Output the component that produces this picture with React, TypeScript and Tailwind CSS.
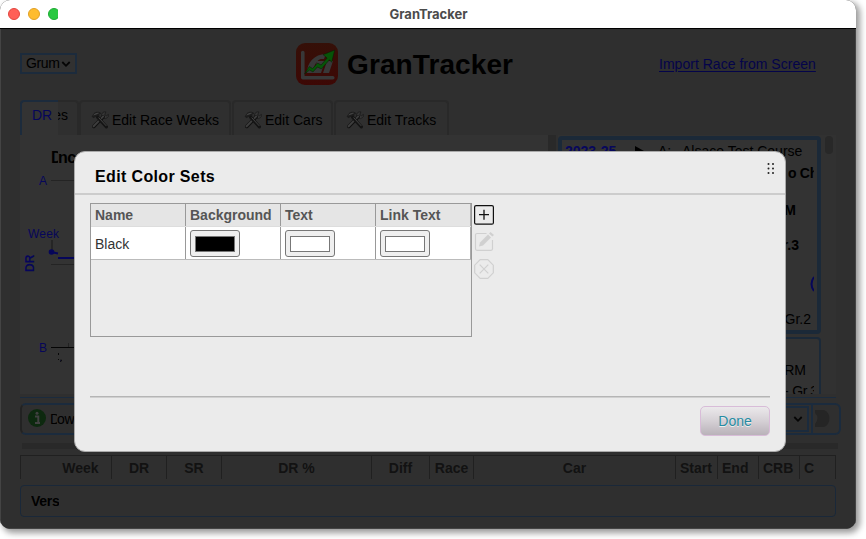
import React from "react";

function Tools() {
  return (
    <svg width="18" height="18" viewBox="0 0 18 18" fill="none" className="shrink-0">
      <path d="M12.500 7.200a3.400 3.400 0 0 0 4.900-3.700l-2.100 1.300-1.500-1L14.900.9a3.500 3.500 0 0 0-4.300 4.200z" fill="#353535" stroke="#151515" strokeWidth=".6" />
      <path d="M12.200 5.800 2.800 15.400" stroke="#111" strokeWidth="3.600" strokeLinecap="round" />
      <path d="M12.200 5.400 2.600 15.200" stroke="#3d3d3d" strokeWidth="2" strokeLinecap="round" />
      <path d="M.6 5.600 2.800 2.400C4.800.3 8.500.4 10.200 2.400L7.900 3.700l.7 1.200-2.400 2.300-1.500-1.500-2.200 1.500z" fill="#1c1c1c" />
      <path d="M2.200 4.400C3.700 1.700 6.200 1.200 8.400 2L6 3.200 4 4z" fill="#424242" />
      <path d="m6.800 6.500 8.600 9.300" stroke="#141414" strokeWidth="3.200" strokeLinecap="round" />
      <path d="m7.600 6.600 7.700 8.300" stroke="#444" strokeWidth="1" />
    </svg>
  );
}

function Logo() {
  return (
    <svg width="42" height="42" viewBox="0 0 42 42" className="shrink-0">
      <defs>
        <linearGradient id="red" x1="0" y1="0" x2="0" y2="1">
          <stop offset="0" stopColor="#351008" />
          <stop offset="1" stopColor="#3d0805" />
        </linearGradient>
      </defs>
      <rect width="42" height="42" rx="9" fill="url(#red)" />
      <path d="M6.800 9.500v25.200h30" fill="none" stroke="#383838" strokeWidth="3.600" strokeLinecap="round" strokeLinejoin="round" />
      <path d="M11 30c0-10 7-19 19-19l-2 5h-3c-4 1-6 5-7 9h3l1-3h-2l1-4h16l-4 12h-6l3-9h-2l-3 9z" fill="#383838" />
      <path d="m8.500 31 4.800-7.500 3.300 2 5-5.500 3.500 2 6-7-4-3.300L38.700 7l-3 12.300-2.200-2.500-8.200 9.200-3.800-2-4.500 5-3.500-2z" fill="#075408" stroke="#0a1807" strokeWidth=".5" />
    </svg>
  );
}

function Chevron() {
  return (
    <svg width="10" height="8" viewBox="0 0 10 8" fill="none" className="shrink-0">
      <path d="m1.300 2 3.700 3.800L8.700 2" stroke="#050505" strokeWidth="1.8" />
    </svg>
  );
}

function TitleBar() {
  return (
    <div className="flex h-[29px] w-full items-center border-b border-black bg-white pl-2">
      <div className="flex w-[50px] gap-2 overflow-hidden">
        <span className="h-3 w-3 shrink-0 rounded-full border border-[#e2463f] bg-[#ff5f57]" />
        <span className="h-3 w-3 shrink-0 rounded-full border border-[#e1a025] bg-[#febc2e]" />
        <span className="h-3 w-3 shrink-0 rounded-full border border-[#1eab34] bg-[#28c840]" />
      </div>
      <div className="flex-1 pr-[57px] text-center font-[Inter] text-[13px] leading-7 font-bold text-[#4b4b4b]">
        <span className="tracking-[-0.02px]">GranTracker</span>
      </div>
    </div>
  );
}

function Header() {
  return (
    <div className="flex h-[71px] items-start">
      <div className="mt-6 flex h-[21px] w-[57px] items-center justify-between border-2 border-[#1c2b3c] bg-[#313131] pr-1 pl-1 text-[14px] text-black">
        <span className="w-[33px] leading-[17px] tracking-[-0.4px]">Grum</span>
        <Chevron />
      </div>
      <div className="mt-[14px] ml-[219px] flex h-[42px] items-center gap-[9px]">
        <Logo />
        <h1 className="text-[28px] leading-[43px] font-bold tracking-[0.1px] text-black">GranTracker</h1>
      </div>
      <div className="mt-[26px] mr-5 ml-auto w-[157px] text-[14px] leading-[18px] tracking-[0.02px] whitespace-nowrap text-[#04044a] underline underline-offset-2">
        Import Race from Screen
      </div>
    </div>
  );
}

function Tab({ width, children }: { width: string; children: string }) {
  return (
    <div className={`${width} flex h-[35px] items-center gap-[3px] rounded-t-[4px] border-2 border-b-0 border-[#292929] bg-[#2f2f2f] pt-[3px] pl-[10px] text-[14px] whitespace-nowrap text-black`}>
      <Tools />
      <span>{children}</span>
    </div>
  );
}

function Tabs() {
  return (
    <div className="flex h-[35px]">
      <div className="flex h-[35px] w-[59px] text-[14px]">
        <div className="h-[35px] w-[38px] rounded-tl-[4px] border-t-2 border-l-2 border-[#1c2b3c] bg-[#333] pl-[10px] leading-[26px] text-[#06065a]">DR</div>
        <div className="flex h-[35px] w-[21px] justify-end rounded-tr-[4px] border-t-2 border-r-2 border-[#292929] pr-[9px] leading-[27px] text-black">
          <div className="flex h-[30px] w-[10px] justify-end overflow-hidden">es</div>
        </div>
      </div>
      <div className="flex gap-px">
        <Tab width="w-[152px]">Edit Race Weeks</Tab>
        <Tab width="w-[101px]">Edit Cars</Tab>
        <Tab width="w-[115px]">Edit Tracks</Tab>
      </div>
    </div>
  );
}

function Chart() {
  return (
    <div className="h-[259px] w-[528px] bg-[#333]">
      <div className="flex h-[32px] pt-[13px] pl-[31px] text-[16px] leading-[19px] font-bold text-black">
        <span className="w-[7px] overflow-hidden">D</span>
        <span className="tracking-[-0.5px]">nc</span>
      </div>
      <svg width="528" height="227" viewBox="20 167 528 227" fill="#06065a" fontSize="12">
        <text x="39" y="185">A</text>
        <path d="M51 180.500h30M51 264.500h30" stroke="#242424" />
        <text x="28" y="238" textLength="31">Week</text>
        <path d="M52 240v12" stroke="#252525" strokeWidth="2" />
        <circle cx="51.500" cy="252" r="2.800" />
        <path d="m51 252 7 1.500M58 258h24" fill="none" stroke="#06065a" strokeWidth="2" />
        <text transform="translate(34 272) rotate(-90)" fontSize="12" fontWeight="bold">DR</text>
        <text x="39" y="352">B</text>
        <path d="M51 347.500h30" stroke="#050505" />
        <path d="M68.500 343v4" stroke="#222" />
        <path d="M58.500 353v2m0 4v1m2 0h1l-1 2" stroke="#080808" />
      </svg>
    </div>
  );
}

function RaceList() {
  return (
    <div className="flex h-[259px] w-[278px] overflow-hidden bg-[#313131] pt-px">
      <div className="flex w-[263px] shrink-0 flex-col gap-[3px]">
        <div className="h-[198px] shrink-0 rounded-[4px] border-4 border-[#1b2938] bg-[#333] text-black">
          <div className="flex h-[24px] pl-[3px] text-[14px] leading-[22px] whitespace-nowrap">
            <span className="w-[70px] font-bold text-[#07075c]">2023-25</span>
            <span className="flex w-[23px] items-center"><svg width="10" height="12" viewBox="0 0 10 12"><path d="M0 0l9 5-9 6z" /></svg></span>
            <span className="w-[24px]">A:</span>
            <span>Alsace Test Course</span>
          </div>
          <div className="flex h-[18px] pl-[226px] text-[14px] leading-[18px] font-bold whitespace-nowrap">
            <span className="w-[26px] overflow-hidden tracking-[-0.3px]">o Ch</span>
          </div>
          <div className="mt-[19px] h-[18px] pr-[21px] text-right text-[14px] leading-[18px] font-bold">RM</div>
          <div className="mt-[17px] h-[18px] pr-[18px] text-right text-[14px] leading-[18px] font-bold">Gr.3</div>
          <div className="mt-[20px] flex h-[22px] justify-end pr-[3px]">
            <svg width="4" height="20" viewBox="0 0 4 20"><path d="M4 3Q-1 10 4 17" stroke="#06065a" strokeWidth="2" fill="none" /></svg>
          </div>
          <div className="mt-[14px] pr-[6px] text-right text-[14px] leading-[18px]">Gr.2</div>
        </div>
        <div className="h-[90px] shrink-0 rounded-[4px] border-2 border-[#1b2938] bg-[#333] pt-[22px] text-[14px] text-black">
          <div className="pr-[13px] text-right leading-[18px]">RM</div>
          <div className="mt-[3px] pl-[224px] leading-[18px]"><div className="w-[30px] overflow-hidden tracking-[-0.2px] whitespace-nowrap">- Gr.3</div></div>
        </div>
      </div>
      <div className="ml-1 h-[18px] w-2 rounded-full bg-[#282828]" />
    </div>
  );
}

function Toolbar() {
  return (
    <div className="flex h-[32px] w-[821px] items-center rounded-[6px] border-2 border-[#1b2b3d] border-l-[#222] text-[14px] text-black">
      <svg width="18" height="18" viewBox="0 0 18 18" className="-mt-[2px] ml-[6px]">
        <circle cx="9" cy="9" r="9" fill="#0d290f" />
        <path d="M7 7.500h3.300v6M7 14h5" stroke="#414141" strokeWidth="2" fill="none" />
        <circle cx="9" cy="4.200" r="1.500" fill="#414141" />
      </svg>
      <div className="ml-1 flex"><span className="w-[7px] overflow-hidden">D</span><span className="tracking-[-0.3px]">own</span></div>
      <div className="ml-auto flex h-[26px] w-[80px] items-center justify-end border-2 border-[#1b2b3d] pr-1"><Chevron /></div>
      <div className="ml-[2px] flex h-[28px] w-[28px] items-center border-l-2 border-[#1b2b3d] pl-[2px]">
        <svg width="18" height="18" viewBox="0 0 18 18"><path d="M0 0h9a8 9 0 0 1 0 17H0v-3q5-6 0-11z" fill="#252525" /></svg>
      </div>
    </div>
  );
}

function RaceTable() {
  return (
    <div className="flex h-[24px] w-[816px] border-t border-l border-[#202020] text-[14px] leading-[25px] font-bold whitespace-nowrap text-[#121212]">
      <div className="w-[91px] border-r border-[#202020] pl-[29px] text-center">Week</div>
      <div className="w-[55px] border-r border-[#202020] text-center">DR</div>
      <div className="w-[55px] border-r border-[#202020] text-center">SR</div>
      <div className="w-[150px] border-r border-[#202020] text-center">DR %</div>
      <div className="w-[58px] border-r border-[#202020] text-center">Diff</div>
      <div className="w-[44px] border-r border-[#202020] text-center">Race</div>
      <div className="w-[202px] border-r border-[#202020] text-center">Car</div>
      <div className="w-[42px] border-r border-[#202020] pl-[4px]">Start</div>
      <div className="w-[41px] border-r border-[#202020] pl-[4px]">End</div>
      <div className="w-[41px] border-r border-[#202020] pl-[4px]">CRB</div>
      <div className="flex-1 border-r border-[#202020] pl-[4px]">C</div>
    </div>
  );
}

function Swatch({ fill }: { fill: string }) {
  return (
    <div className="flex h-[27px] w-[50px] items-center justify-center rounded-[3px] border border-[#777] bg-[#efefef]">
      <div className={`h-4 w-10 border border-[#777] ${fill}`} />
    </div>
  );
}

function ColorTable() {
  return (
    <div className="h-[134px] w-[382px] border border-[#999] text-[14px]">
      <div className="flex h-[23px] border-b border-[#ddd] bg-[#e5e5e5] leading-[23px] font-bold text-[#555]">
        <div className="w-[95px] border-r border-[#999] pl-1">Name</div>
        <div className="w-[95px] border-r border-[#999] pl-1">Background</div>
        <div className="w-[95px] border-r border-[#999] pl-1">Text</div>
        <div className="w-[95px] border-r border-[#aaa] pl-1">Link Text</div>
      </div>
      <div className="flex h-[33px] border-b border-[#bbb] bg-white text-[#333]">
        <div className="w-[95px] border-r border-[#999] pl-1 leading-[35px]">Black</div>
        <div className="w-[95px] border-r border-[#999] pt-[3px] pl-1"><Swatch fill="bg-black" /></div>
        <div className="w-[95px] border-r border-[#999] pt-[3px] pl-1"><Swatch fill="bg-white" /></div>
        <div className="w-[95px] border-r border-[#aaa] pt-[3px] pl-1"><Swatch fill="bg-white" /></div>
      </div>
    </div>
  );
}

function Actions() {
  return (
    <div className="flex flex-col gap-[7px] pt-[2px]">
      <svg width="20" height="20" viewBox="0 0 20 20" fill="none" stroke="#111">
        <rect x=".6" y=".6" width="18.800" height="18.600" rx="1.500" strokeWidth="1.200" />
        <path d="M5 9.700h10M10 4.700v10" strokeWidth="1.300" />
      </svg>
      <svg width="20" height="20" viewBox="0 0 20 20" fill="none" stroke="#d0d0d0">
        <path d="M12.500 1.500H3a1.500 1.500 0 0 0-1.500 1.500v14A1.500 1.500 0 0 0 3 18.300h14a1.500 1.500 0 0 0 1.500-1.500V8" strokeWidth="1.200" />
        <path d="m5 14.500 1-4L14 2.500l3 3-8 8z" fill="#d0d0d0" stroke="none" />
        <path d="m15 1.500 1.500-1.500L20 3l-1.700 1.500z" fill="#d0d0d0" stroke="none" />
      </svg>
      <svg width="20" height="20" viewBox="0 0 20 20" fill="none" stroke="#d0d0d0" strokeWidth="1.200">
        <path d="M6.200.7h7.600l5.500 5.500v7.600l-5.500 5.500H6.200L.7 13.800V6.200z" />
        <path d="m5.700 5.700 8.600 8.600m0-8.600-8.600 8.600" />
      </svg>
    </div>
  );
}

function Modal() {
  return (
    <div className="absolute top-[151px] left-[74px] flex h-[301px] w-[712px] flex-col rounded-[11px] border border-[#aaa] bg-[#ebebeb]">
      <div className="flex h-[43px] items-start justify-between border-b-2 border-[#ccc] pr-[10px] pl-5">
        <h2 className="pt-[15px] text-[16px] leading-[20px] font-bold tracking-[0.36px] text-black">Edit Color Sets</h2>
        <svg width="8" height="13" viewBox="0 0 8 13" className="mt-[10px]" fill="#222">
          <circle cx="1.500" cy="2" r="1" /><circle cx="6" cy="2" r="1" />
          <circle cx="1.500" cy="6.500" r="1" /><circle cx="6" cy="6.500" r="1" />
          <circle cx="1.500" cy="11" r="1" /><circle cx="6" cy="11" r="1" />
        </svg>
      </div>
      <div className="mt-2 ml-[15px] flex gap-[2px]"><ColorTable /><Actions /></div>
      <div className="mt-[59px] mr-[15px] ml-[15px] h-[2px] border-t border-[#b5b5b5] bg-[#d0d0d0]" />
      <div className="flex justify-end pt-2 pr-[15px]">
        <button className="h-[30px] w-[70px] rounded-[5px] border border-[#d8bcd8] bg-linear-to-b from-[#ebe9eb] via-[#d5d0d5] to-[#b9b2b9] text-[14px] leading-[28px] text-[#278ba3] [text-shadow:0_1px_0_#eee]">Done</button>
      </div>
    </div>
  );
}

export default function App() {
  return (
    <div className="relative h-[539px] w-[866px] overflow-hidden bg-white font-['Liberation_Sans',Arial,sans-serif]">
      <div className="h-[529px] w-[856px] overflow-hidden rounded-[10px] bg-[#2f2f2f] shadow-[3px_3px_6px_1px_rgba(0,0,0,0.4)]">
        <TitleBar />
        <div className="h-[500px] border-r border-b border-l border-[#444] pr-[19px] pl-[19px]">
          <Header />
          <Tabs />
          <div className="flex h-[259px]">
            <Chart />
            <div className="mr-[2px] w-2 bg-[#292929]" />
            <RaceList />
          </div>
          <div className="mt-[3px] mb-[5px] h-px w-[816px] bg-[#1b2b3d]" />
          <Toolbar />
          <div className="mt-2 ml-[2px] h-[6px] w-[816px] bg-[#292929]" />
          <div className="mt-[6px]"><RaceTable /></div>
          <div className="mt-[6px] h-[32px] w-[816px] rounded-[4px] border border-[#1a2839] pl-[10px] text-[14px] leading-[31px] font-bold text-black">
            <div className="w-[28px] overflow-hidden tracking-[-0.3px]">Vers</div>
          </div>
        </div>
      </div>
      <Modal />
    </div>
  );
}
